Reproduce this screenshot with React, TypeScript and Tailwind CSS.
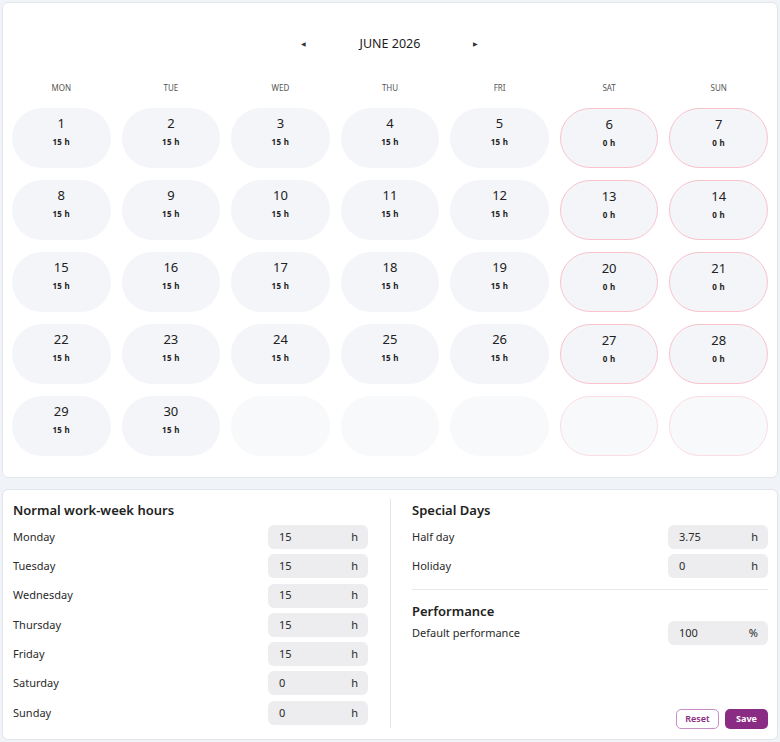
import React from 'react';

const weekdays = ['MON', 'TUE', 'WED', 'THU', 'FRI', 'SAT', 'SUN'];

type Cell = { day?: number; weekend: boolean };

function buildCells(): Cell[] {
  const cells: Cell[] = [];
  for (let i = 0; i < 35; i++) {
    const day = i + 1;
    cells.push({ day: day <= 30 ? day : undefined, weekend: i % 7 >= 5 });
  }
  return cells;
}

function DayCell({ cell }: { cell: Cell }) {
  if (!cell.day) {
    return (
      <div
        className={`h-[60px] rounded-full bg-[#f8f9fb] ${
          cell.weekend ? 'border border-[#fbdce2]' : ''
        }`}
      />
    );
  }
  return (
    <div
      className={`h-[60px] rounded-full bg-[#f4f5f9] flex flex-col items-center pt-[6px] ${
        cell.weekend ? 'border border-[#f9c3cc]' : ''
      }`}
    >
      <span className="text-[13px] leading-[18px] text-[#222]">{cell.day}</span>
      <span className="text-[8px] leading-[12px] mt-[4px] font-bold text-[#222] tracking-[0.3px]">
        {cell.weekend ? '0 h' : '15 h'}
      </span>
    </div>
  );
}

function HoursRow({ label, value, unit = 'h' }: { label: string; value: string; unit?: string }) {
  return (
    <div className="flex items-center justify-between h-[24px]">
      <span className="text-[11px] text-[#2a2a2a]">{label}</span>
      <div className="w-[100px] h-[24px] rounded-[6px] bg-[#ededef] flex items-center justify-between pl-[11px] pr-[10px] text-[11px] text-[#2a2a2a]">
        <span>{value}</span>
        <span>{unit}</span>
      </div>
    </div>
  );
}

export default function App() {
  const cells = buildCells();
  return (
    <div
      className="w-[780px] h-[742px] bg-[#f0f3f7] p-[2px] flex flex-col gap-[11px]"
      style={{ fontFamily: '"Noto Sans", "Open Sans", sans-serif' }}
    >
      {/* Calendar */}
      <div className="bg-white border border-[#e2e5ea] rounded-[6px] px-[9px] pt-[28px] pb-[21px]">
        <div className="flex items-center justify-center h-[26px] gap-[50px]">
          <span className="text-[6px] text-[#333] w-[6px]">◀</span>
          <span className="text-[12.5px] text-[#1c1c1c] w-[66px] text-center">JUNE 2026</span>
          <span className="text-[6px] text-[#333] w-[6px]">▶</span>
        </div>
        <div className="grid grid-cols-7 gap-x-[11px] mt-[26px]">
          {weekdays.map((d) => (
            <div key={d} className="text-center text-[8px] leading-[10px] text-[#555]">
              {d}
            </div>
          ))}
        </div>
        <div className="grid grid-cols-7 gap-x-[11px] gap-y-[12px] mt-[15px]">
          {cells.map((c, i) => (
            <DayCell key={i} cell={c} />
          ))}
        </div>
      </div>

      {/* Settings */}
      <div className="flex-1 bg-white border border-[#e2e5ea] rounded-[6px] pl-[10px] pr-[9px] pt-[10px] pb-[13px] flex">
        <div className="w-[355px] flex flex-col">
          <h2 className="text-[13px] leading-[20px] font-semibold text-[#222]">Normal work-week hours</h2>
          <div className="flex flex-col gap-[5.3px] mt-[5px]">
            <HoursRow label="Monday" value="15" />
            <HoursRow label="Tuesday" value="15" />
            <HoursRow label="Wednesday" value="15" />
            <HoursRow label="Thursday" value="15" />
            <HoursRow label="Friday" value="15" />
            <HoursRow label="Saturday" value="0" />
            <HoursRow label="Sunday" value="0" />
          </div>
        </div>
        <div className="w-px bg-[#e4e6ea] ml-[22px] mr-[21px] mt-[-1px] mb-[-2px]" />
        <div className="flex-1 flex flex-col">
          <h2 className="text-[13px] leading-[20px] font-semibold text-[#222]">Special Days</h2>
          <div className="flex flex-col gap-[5.3px] mt-[5px]">
            <HoursRow label="Half day" value="3.75" />
            <HoursRow label="Holiday" value="0" />
          </div>
          <div className="h-px bg-[#e6e8eb] mt-[11px]" />
          <h2 className="text-[13px] leading-[20px] font-semibold text-[#222] mt-[11px]">Performance</h2>
          <div>
            <HoursRow label="Default performance" value="100" unit="%" />
          </div>
          <div className="mt-auto flex justify-end gap-[6px] mb-[-3px]">
            <button className="h-[20px] w-[43px] rounded-[5px] border border-[#c98ec5] text-[9px] font-semibold text-[#8a2c82] bg-white">
              Reset
            </button>
            <button className="h-[20px] w-[43px] rounded-[5px] bg-[#8a2c84] text-[9px] font-bold text-white">
              Save
            </button>
          </div>
        </div>
      </div>
    </div>
  );
}
